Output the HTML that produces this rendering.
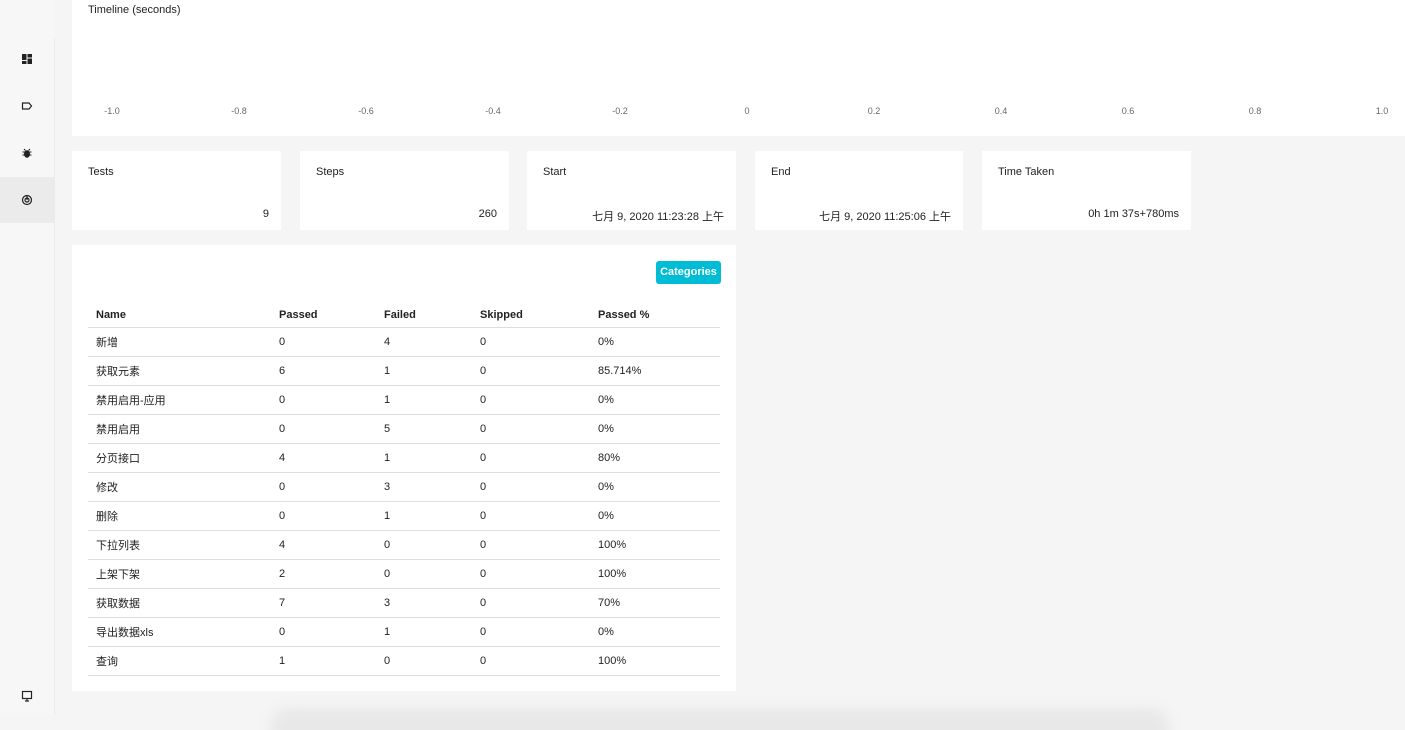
<!DOCTYPE html>
<html><head><meta charset="utf-8"><style>
*{box-sizing:border-box;margin:0;padding:0}
html{width:1405px;height:730px;overflow:hidden}
body{width:1405px;height:730px;background:#f5f5f5;font-family:"Liberation Sans","Noto Sans CJK SC",sans-serif;font-size:11px;color:#222;position:relative;overflow:hidden}
.side{position:absolute;left:0;top:0;width:55px;height:715px;background:#f7f7f7}
.sb{position:absolute;left:54px;top:38px;width:1px;height:677px;background:#ebebeb}
.ic{position:absolute;left:21px;width:12px;height:12px}
.act{position:absolute;left:0;top:177px;width:55px;height:46px;background:#ebebeb}
.card{position:absolute;background:#fff}
.lbl{position:absolute;left:16px;top:15px;font-size:11px}
.val{position:absolute;right:12px;top:57px;font-size:11px}
.ax{position:absolute;top:106px;font-size:9px;color:#666;transform:translateX(-50%)}
table{position:absolute;left:16px;top:58px;width:632px;border-collapse:collapse}
td,th{text-align:left;height:29px;border-bottom:1px solid #ddd;font-size:11px;padding-left:8px;font-weight:normal}
th{font-weight:bold;height:24px}
.btn{position:absolute;left:584px;top:16px;width:65px;height:23px;background:#00bcd4;color:#fff;font-weight:bold;font-size:11px;border-radius:3px;text-align:center;line-height:23px}
</style></head><body>
<div class="side">
<div class="act"></div>
<div class="sb"></div>
<svg class="ic" style="top:53px" viewBox="0 0 12 12"><rect x="1" y="1" width="4.5" height="6" fill="#222"/><rect x="6.5" y="1" width="4.5" height="3.5" fill="#222"/><rect x="1" y="8" width="4.5" height="3" fill="#222"/><rect x="6.5" y="5.5" width="4.5" height="5.5" fill="#222"/></svg>
<svg class="ic" style="top:100px" viewBox="0 0 12 12"><path d="M1.5 3h6.5l2.5 3-2.5 3H1.5z" fill="none" stroke="#222" stroke-width="1.2"/></svg>
<svg class="ic" style="top:147px" viewBox="0 0 12 12"><ellipse cx="6" cy="7" rx="3" ry="3.8" fill="#222"/><path d="M1.5 5h9M1.5 8h9M3 2l1.5 1.5M9 2 7.5 3.5" stroke="#222" stroke-width="1"/></svg>
<svg class="ic" style="top:194px" viewBox="0 0 12 12"><circle cx="6" cy="6" r="4.5" fill="none" stroke="#222" stroke-width="1.2"/><circle cx="6" cy="6" r="2" fill="none" stroke="#222" stroke-width="1.2"/><path d="M6 6V1" stroke="#222" stroke-width="1.2"/></svg>
<svg class="ic" style="top:690px" viewBox="0 0 12 12"><rect x="1.5" y="1.5" width="9" height="7" fill="none" stroke="#222" stroke-width="1.2"/><path d="M6 9v2M4 11h4" stroke="#222" stroke-width="1.2"/></svg>
</div>
<div class="card" style="left:72px;top:0;width:1333px;height:136px">
<div style="position:absolute;left:16px;top:4px">Timeline (seconds)</div>
<div class="ax" style="left:40px">-1.0</div><div class="ax" style="left:167px">-0.8</div><div class="ax" style="left:294px">-0.6</div><div class="ax" style="left:421px">-0.4</div><div class="ax" style="left:548px">-0.2</div><div class="ax" style="left:675px">0</div><div class="ax" style="left:802px">0.2</div><div class="ax" style="left:929px">0.4</div><div class="ax" style="left:1056px">0.6</div><div class="ax" style="left:1183px">0.8</div><div class="ax" style="left:1310px">1.0</div>
</div>
<div class="card" style="left:72px;top:151px;width:209px;height:79px"><div class="lbl">Tests</div><div class="val">9</div></div>
<div class="card" style="left:300px;top:151px;width:209px;height:79px"><div class="lbl">Steps</div><div class="val">260</div></div>
<div class="card" style="left:527px;top:151px;width:209px;height:79px"><div class="lbl">Start</div><div class="val">七月 9, 2020 11:23:28 上午</div></div>
<div class="card" style="left:755px;top:151px;width:208px;height:79px"><div class="lbl">End</div><div class="val">七月 9, 2020 11:25:06 上午</div></div>
<div class="card" style="left:982px;top:151px;width:209px;height:79px"><div class="lbl">Time Taken</div><div class="val">0h 1m 37s+780ms</div></div>
<div class="card" style="left:72px;top:245px;width:664px;height:446px">
<div class="btn">Categories</div>
<table>
<tr><th style="width:183px">Name</th><th style="width:105px">Passed</th><th style="width:96px">Failed</th><th style="width:118px">Skipped</th><th>Passed %</th></tr>
<tr><td>新增</td><td>0</td><td>4</td><td>0</td><td>0%</td></tr>
<tr><td>获取元素</td><td>6</td><td>1</td><td>0</td><td>85.714%</td></tr>
<tr><td>禁用启用-应用</td><td>0</td><td>1</td><td>0</td><td>0%</td></tr>
<tr><td>禁用启用</td><td>0</td><td>5</td><td>0</td><td>0%</td></tr>
<tr><td>分页接口</td><td>4</td><td>1</td><td>0</td><td>80%</td></tr>
<tr><td>修改</td><td>0</td><td>3</td><td>0</td><td>0%</td></tr>
<tr><td>删除</td><td>0</td><td>1</td><td>0</td><td>0%</td></tr>
<tr><td>下拉列表</td><td>4</td><td>0</td><td>0</td><td>100%</td></tr>
<tr><td>上架下架</td><td>2</td><td>0</td><td>0</td><td>100%</td></tr>
<tr><td>获取数据</td><td>7</td><td>3</td><td>0</td><td>70%</td></tr>
<tr><td>导出数据xls</td><td>0</td><td>1</td><td>0</td><td>0%</td></tr>
<tr><td>查询</td><td>1</td><td>0</td><td>0</td><td>100%</td></tr>
</table>
</div>
<div style="position:absolute;left:270px;top:708px;width:900px;height:40px;background:#e8e8e8;border-radius:20px;filter:blur(6px)"></div>
</body></html>
